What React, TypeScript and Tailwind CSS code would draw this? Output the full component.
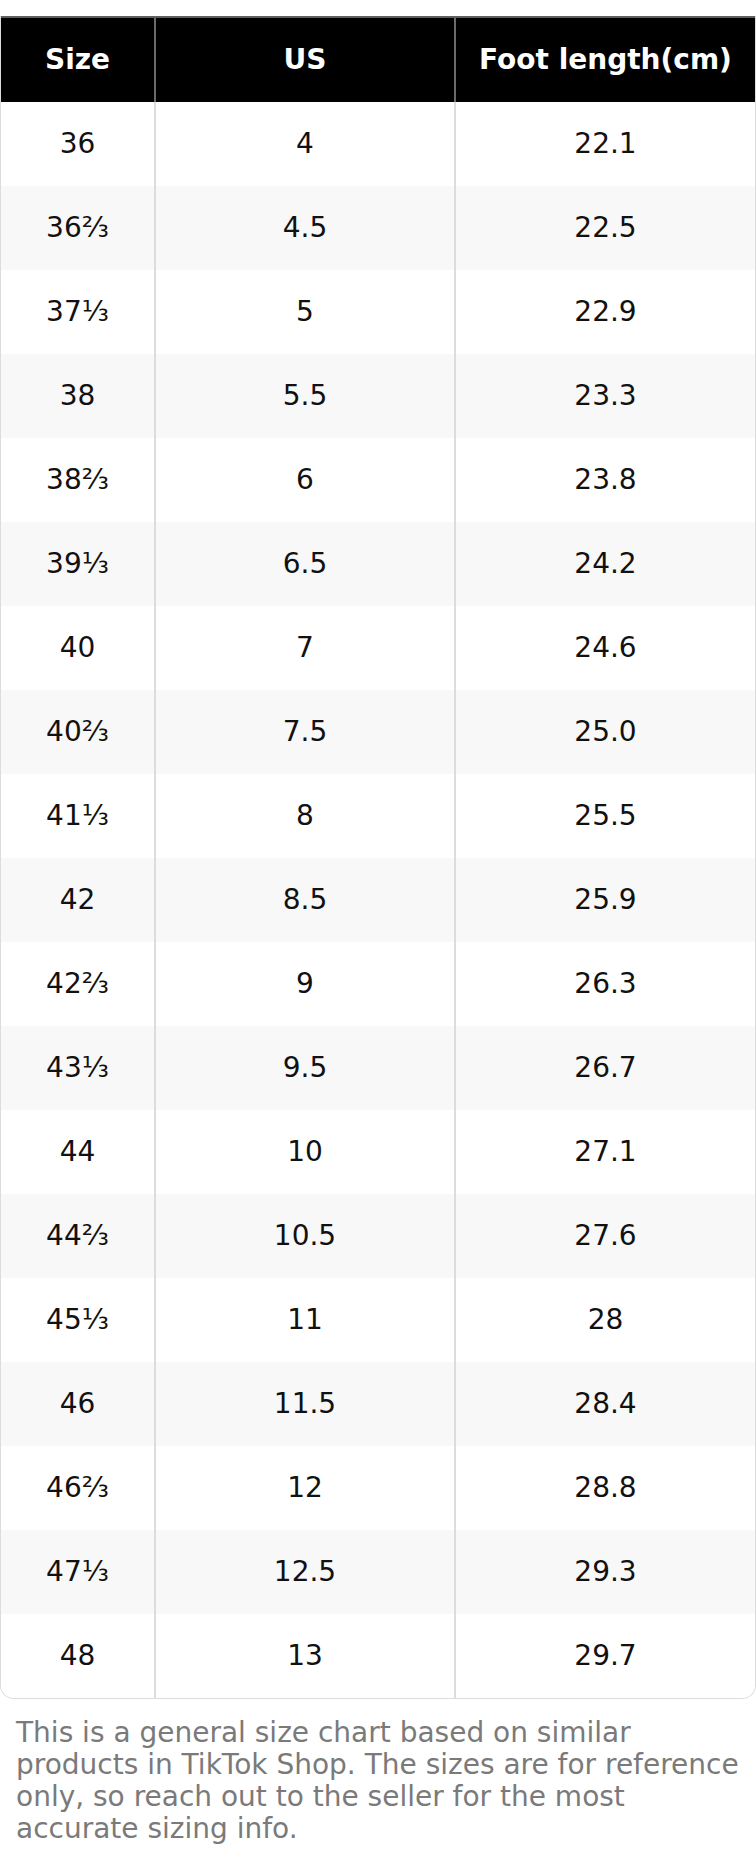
const ROWS: [string, string, string][] = [
  ["36", "4", "22.1"],
  ["36⅔", "4.5", "22.5"],
  ["37⅓", "5", "22.9"],
  ["38", "5.5", "23.3"],
  ["38⅔", "6", "23.8"],
  ["39⅓", "6.5", "24.2"],
  ["40", "7", "24.6"],
  ["40⅔", "7.5", "25.0"],
  ["41⅓", "8", "25.5"],
  ["42", "8.5", "25.9"],
  ["42⅔", "9", "26.3"],
  ["43⅓", "9.5", "26.7"],
  ["44", "10", "27.1"],
  ["44⅔", "10.5", "27.6"],
  ["45⅓", "11", "28"],
  ["46", "11.5", "28.4"],
  ["46⅔", "12", "28.8"],
  ["47⅓", "12.5", "29.3"],
  ["48", "13", "29.7"],
];

const cols = "grid grid-cols-[153px_300px_1fr]";

export default function App() {
  return (
    <div className="min-h-[1860px] bg-white pt-4 font-['DejaVu_Sans',sans-serif]">
      <div className="overflow-hidden rounded-b-[14px] border-x border-b border-[#dcdcdc]">
        <div className={`${cols} h-[86px] border-t-2 border-[#5f5f5f] bg-black text-[28px] font-bold text-white`}>
          <div className="flex items-center justify-center">Size</div>
          <div className="flex items-center justify-center border-l-2 border-[#6a6a6a]">US</div>
          <div className="flex items-center justify-center border-l-2 border-[#6a6a6a]">Foot length(cm)</div>
        </div>
        {ROWS.map(([size, us, cm], i) => (
          <div
            key={size}
            className={`${cols} h-[84px] text-[28px] text-[#111] ${i % 2 === 1 ? "bg-[#f8f8f8]" : "bg-white"}`}
          >
            <div className="flex items-center justify-center">{size}</div>
            <div className="flex items-center justify-center border-l-2 border-[#dcdcdc]">{us}</div>
            <div className="flex items-center justify-center border-l-2 border-[#dcdcdc]">{cm}</div>
          </div>
        ))}
      </div>
      <p className="px-4 pt-[18px] text-[28px] leading-[32px] text-[#7a7a7a]">
        This is a general size chart based on similar products in TikTok Shop. The sizes are for reference only, so reach
        out to the seller for the most accurate sizing info.
      </p>
    </div>
  );
}
